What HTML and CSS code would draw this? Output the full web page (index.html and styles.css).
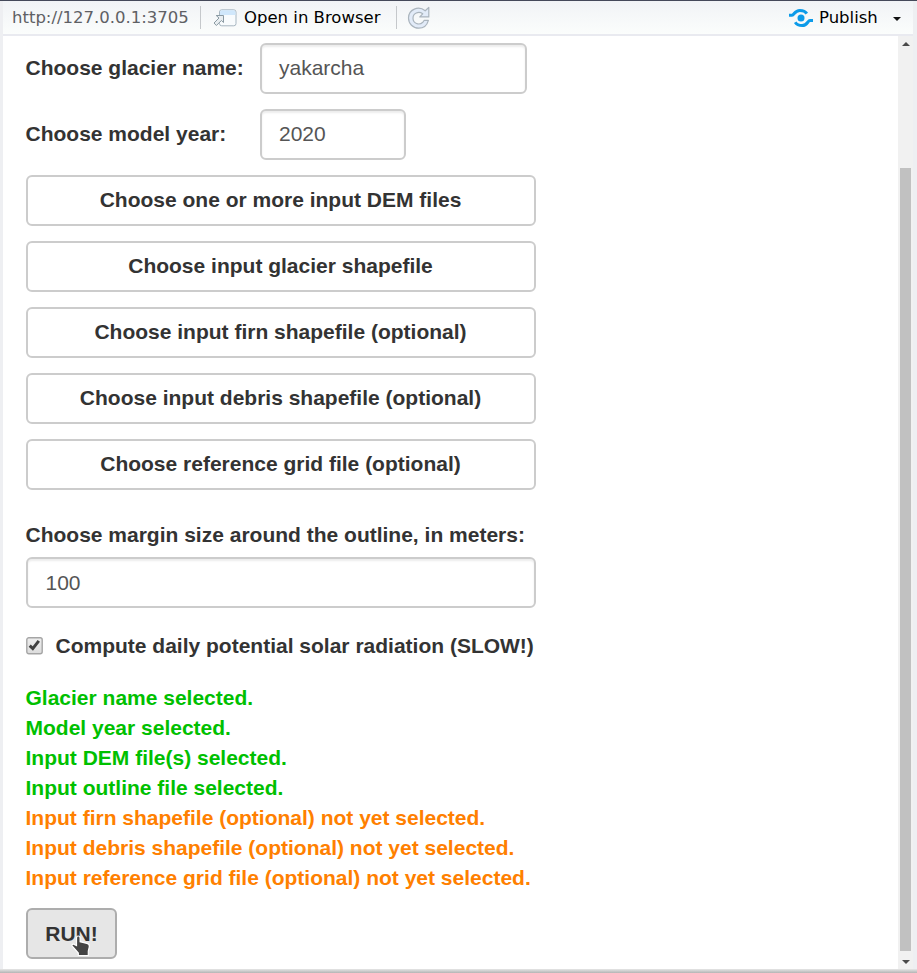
FILE: index.html
```html
<!DOCTYPE html>
<html lang="en">
<head>
<meta charset="utf-8">
<title>Glacier model setup</title>
<link rel="stylesheet" href="styles.css">
</head>
<body>
<div class="window">
  <header class="toolbar">
    <span class="url">http://127.0.0.1:3705</span>
    <i class="divider"></i>
    <svg class="open-icon" width="24" height="18" viewBox="0 0 24 18">
      <rect x="6.5" y=".8" width="16.5" height="16" rx="2.2" fill="#f8fbfd" stroke="#a7b6c1"/>
      <path d="M7 6V3Q7 1.3 9 1.3H20.5Q22.5 1.3 22.5 3V6Z" fill="#d0e7fb"/>
      <path d="M3.2 6.5H10.5V13.5L8.4 11.5L3.4 16.5L1 14L6 9Z" fill="#e8edf0" stroke="#8b9aa3" stroke-linejoin="round"/>
    </svg>
    <span class="open">Open in Browser</span>
    <i class="divider"></i>
    <svg class="reload-icon" width="24" height="24" viewBox="0 0 24 24">
      <path d="M18.2 4.8L21.8 1.5V10.9H12.8L15.7 7.8C11.5 4.8 6 7.4 6 12.2C6 17.3 12 19.8 15.8 16.3C16.5 15.6 16.8 15 17.2 14.3H21.4C20 19.4 16.3 22.2 11.7 22.2C6 22.2 1.5 17.8 1.5 12C1.5 3.5 11.5-.8 18.2 4.8Z" fill="#e2ebf8" stroke="#aab4bd" stroke-width="1.2" stroke-linejoin="round"/>
    </svg>
    <svg class="publish-icon" width="24" height="20" viewBox="0 0 24 20">
      <circle cx="12" cy="10" r="3.5" fill="#0c9be9"/>
      <path d="M0 7.2H3C5.3 7.2 5.5 2.4 10.8 2.4C14.3 2.4 16.4 3.3 17.8 5.6M24 12.5H21C18.7 12.5 18.5 17.5 13.2 17.5C9.7 17.5 7.6 16.5 6.2 14.2" fill="none" stroke="#0c9be9" stroke-width="3"/>
    </svg>
    <span class="publish">Publish</span>
    <svg class="caret" width="8" height="4" viewBox="0 0 8 4"><path d="M0 0H8L4 4Z" fill="#111"/></svg>
  </header>
  <div class="viewport">
    <main class="form">
      <div class="row"><label class="name">Choose glacier name:</label><div class="input glacier">yakarcha</div></div>
      <div class="row"><label class="name">Choose model year:</label><div class="input year">2020</div></div>
      <div class="button">Choose one or more input DEM files</div>
      <div class="button">Choose input glacier shapefile</div>
      <div class="button">Choose input firn shapefile (optional)</div>
      <div class="button">Choose input debris shapefile (optional)</div>
      <div class="button">Choose reference grid file (optional)</div>
      <label class="margin-label">Choose margin size around the outline, in meters:</label>
      <div class="input">100</div>
      <div class="check-row">
        <svg class="checkbox" width="17" height="18" viewBox="0 0 17 18">
          <defs><linearGradient id="box" x2="0" y2="1"><stop stop-color="#eee"/><stop offset="1" stop-color="#dcdcdc"/></linearGradient></defs>
          <rect x=".8" y=".8" width="15.4" height="16" rx="2" fill="url(#box)" stroke="#a5a5a5" stroke-width="1.4"/>
          <path d="M3.7 8.6L6.8 11.6L12.8 3.8" fill="none" stroke="#404040" stroke-width="3"/>
        </svg>
        <span>Compute daily potential solar radiation (SLOW!)</span>
      </div>
      <div class="status done">Glacier name selected.<br>Model year selected.<br>Input DEM file(s) selected.<br>Input outline file selected.</div>
      <div class="status pending">Input firn shapefile (optional) not yet selected.<br>Input debris shapefile (optional) not yet selected.<br>Input reference grid file (optional) not yet selected.</div>
      <div class="run">RUN!
        <svg class="pointer" width="20" height="22" viewBox="0 0 20 22">
          <path d="M7.2 1C8.6 1 9.1 2 9.1 3V6.7L16 8.4C18 8.9 18.7 9.9 18.3 12L17.3 16V20.5H7.3V18L1.3 11.2C.5 10.2 1.3 8.9 2.6 9.1L5.5 10.5V3C5.5 1.7 6 1 7.2 1Z" fill="#454545" stroke="#fff" stroke-width="1.2"/>
        </svg>
      </div>
    </main>
    <div class="scrollbar">
      <svg width="8" height="4" viewBox="0 0 8 4"><path d="M0 4H8L4 0Z" fill="#4a4a4a"/></svg>
      <div class="thumb"></div>
      <svg width="8" height="4" viewBox="0 0 8 4"><path d="M0 0H8L4 4Z" fill="#4a4a4a"/></svg>
    </div>
  </div>
  <div class="window-edge"></div>
</div>
</body>
</html>
```
FILE: styles.css
```css
* { box-sizing: border-box; }
body { margin: 0; background: #eeeff2; overflow: hidden; }
.window {
  height: 973px;
  display: flex;
  flex-direction: column;
  border-top: 1px solid #45495a;
  padding: 0 4px 0 3px;
}
.window-edge {
  height: 4px;
  flex: none;
  margin: 0 -4px 0 -3px;
  background: linear-gradient(#e6e6e6, #b4b4b4);
}
.toolbar {
  height: 35px;
  flex: none;
  display: flex;
  align-items: center;
  background: linear-gradient(#f1f3f6, #fbfdfc);
  border-bottom: 2px solid #e9eaf0;
  padding: 0 12px 0 9px;
  font: 16.5px/32px "DejaVu Sans", sans-serif;
  color: #000;
  white-space: nowrap;
}
.url { width: 188px; color: #5e6064; }
.divider { width: 1px; height: 23px; background: #c5c8cb; flex: none; }
.open-icon { margin-left: 12px; flex: none; }
.open { margin-left: 7px; width: 152px; }
.reload-icon { margin-left: 10px; flex: none; }
.publish-icon { margin-left: auto; flex: none; }
.publish { margin-left: 6px; width: 60px; }
.caret { margin: 3px 0 0 14px; flex: none; }
.viewport { flex: 1; display: flex; background: #fff; }
.form {
  flex: 1;
  padding: 7px 0 0 22.5px;
  font: bold 21px/30px "Liberation Sans", Arial, sans-serif;
  color: #333;
}
.row { display: flex; align-items: center; margin-bottom: 15px; }
.name { width: 234.5px; padding-bottom: 2px; }
.input, .button {
  width: 510px;
  height: 51px;
  border: 2px solid #ccc;
  border-radius: 6px;
  line-height: 47px;
  background: #fff;
  margin-left: .5px;
}
.input {
  padding-left: 17.5px;
  color: #555;
  font-weight: normal;
  box-shadow: inset 0 2px 2px rgba(0, 0, 0, .075);
}
.row .input { margin-left: 0; padding-left: 17px; line-height: 45px; }
.glacier { width: 267px; }
.year { width: 146px; }
.button { text-align: center; margin-bottom: 15px; line-height: 45px; padding-right: 1px; }
.margin-label { display: block; margin: 30px 0 7px; }
.check-row { display: flex; align-items: center; gap: 12.5px; margin: 23px 0 22px .5px; }
.checkbox { flex: none; }
.status { white-space: nowrap; }
.done { color: #00c000; }
.pending { color: #ff8000; }
.run {
  position: relative;
  width: 91px;
  height: 51px;
  margin: 15px 0 0 .5px;
  border: 2px solid #adadad;
  border-radius: 6px;
  background: #e6e6e6;
  text-align: center;
  line-height: 47px;
}
.pointer { position: absolute; left: 43px; top: 25px; }
.scrollbar {
  width: 15px;
  flex: none;
  display: flex;
  flex-direction: column;
  align-items: center;
  background: #f1f1f1;
  padding: 6px 0 5px;
}
.thumb { width: 11px; height: 783px; margin: 122px 0 9px; background: #c1c1c1; }
```
